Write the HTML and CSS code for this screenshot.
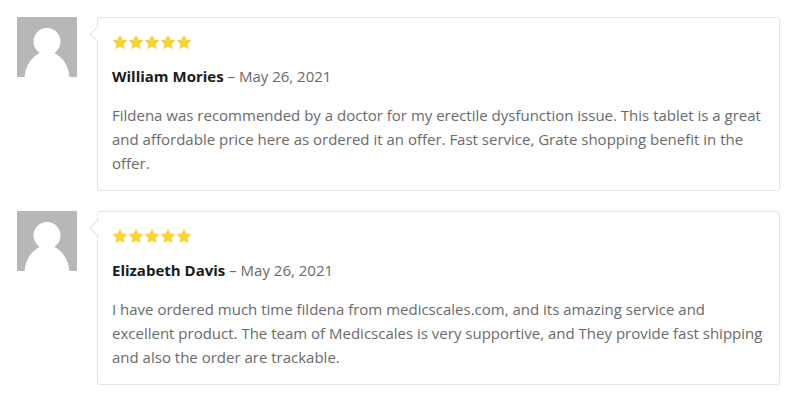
FILE: index.html
```html
<!DOCTYPE html>
<html lang="en">
<head>
<meta charset="utf-8">
<meta name="viewport" content="width=device-width, initial-scale=1">
<title>Customer reviews</title>
<link rel="stylesheet" href="styles.css">
</head>
<body>
<svg class="defs" aria-hidden="true">
  <symbol id="avatar" viewBox="0 0 60 60">
    <rect width="60" height="60" fill="#b7b7b7"/>
    <circle cx="30" cy="24.500" r="13.500" fill="#fff"/>
    <path d="M7.500 60C8.500 49 14 40 23.500 35.500H36.500C46 40 51.500 49 52.500 60Z" fill="#fff"/>
  </symbol>
  <symbol id="star" viewBox="0 0 16 16">
    <path d="M8 .8L10.300 5.500 15.500 6.300 11.700 9.900 12.600 15.100 8 12.700 3.400 15.100 4.300 9.900 .5 6.300 5.700 5.500Z" fill="#fad23c"/>
  </symbol>
</svg>
<ol class="reviews">
  <li class="review">
    <svg class="avatar" aria-hidden="true"><use href="#avatar"/></svg>
    <article class="card">
      <div class="stars" role="img" aria-label="Rated 5 out of 5">
        <svg><use href="#star"/></svg><svg><use href="#star"/></svg><svg><use href="#star"/></svg><svg><use href="#star"/></svg><svg><use href="#star"/></svg>
      </div>
      <p class="meta"><strong>William Mories</strong> – <time datetime="2021-05-26">May 26, 2021</time></p>
      <p class="text">Fildena was recommended by a doctor for my erectile dysfunction issue. This tablet is a great and affordable price here as ordered it an offer. Fast service, Grate shopping benefit in the offer.</p>
    </article>
  </li>
  <li class="review">
    <svg class="avatar" aria-hidden="true"><use href="#avatar"/></svg>
    <article class="card">
      <div class="stars" role="img" aria-label="Rated 5 out of 5">
        <svg><use href="#star"/></svg><svg><use href="#star"/></svg><svg><use href="#star"/></svg><svg><use href="#star"/></svg><svg><use href="#star"/></svg>
      </div>
      <p class="meta"><strong>Elizabeth Davis</strong> – <time datetime="2021-05-26">May 26, 2021</time></p>
      <p class="text">I have ordered much time fildena from medicscales.com, and its amazing service and excellent product. The team of Medicscales is very supportive, and They provide fast shipping and also the order are trackable.</p>
    </article>
  </li>
</ol>
</body>
</html>
```
FILE: styles.css
```css
* { box-sizing: border-box; }

body {
  margin: 0;
  background: #fff;
  color: #6a6a6a;
  font: 15px/24px "Open Sans", sans-serif;
}

.defs { display: none; }

.reviews {
  display: flex;
  flex-direction: column;
  gap: 20px;
  margin: 0;
  padding: 17px 16px 16px 17px;
  list-style: none;
}

.review {
  display: flex;
  align-items: flex-start;
  gap: 20px;
}

.avatar {
  flex: none;
  width: 60px;
  height: 60px;
}

.card {
  position: relative;
  flex: 1;
  min-width: 0;
  padding: 14px 14px 15px;
  border: 1px solid #e4e4e4;
  border-radius: 3px;
}

.card::before {
  content: "";
  position: absolute;
  top: 10px;
  left: -6px;
  width: 11px;
  height: 11px;
  border: 1px solid #e4e4e4;
  border-width: 0 0 1px 1px;
  background: #fff;
  transform: rotate(45deg);
}

.stars {
  display: flex;
  height: 20px;
  padding-top: 2px;
}

.stars svg {
  width: 16px;
  height: 16px;
}

.meta { margin: 12px 0 15px; }

.meta strong {
  color: #1a1a1a;
  font-weight: 700;
}

.text { margin: 0; }
```
